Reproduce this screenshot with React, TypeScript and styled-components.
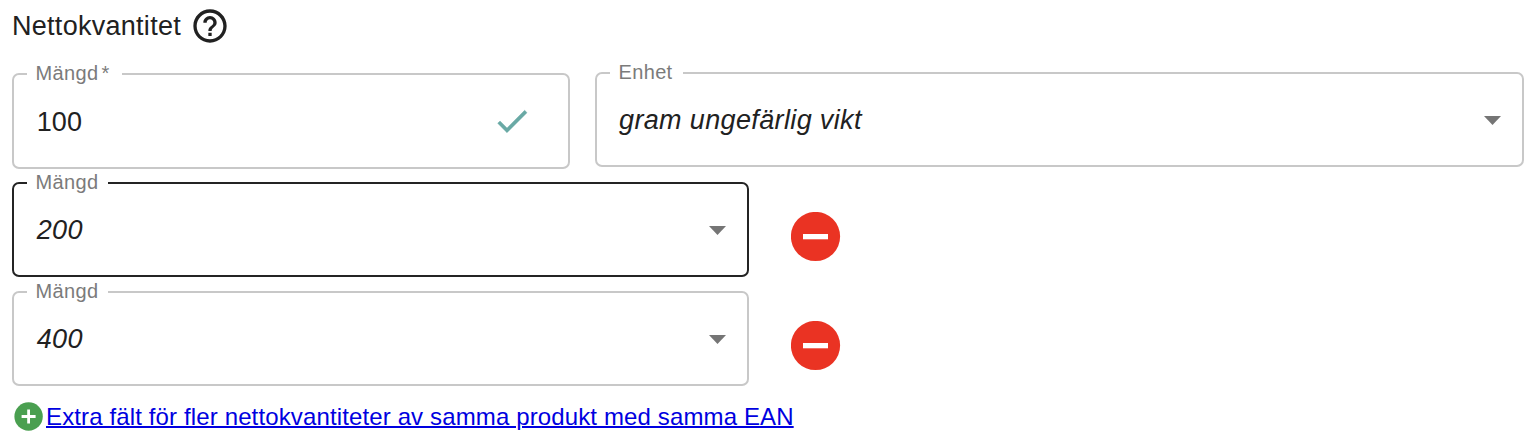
import React from "react";
import styled, { createGlobalStyle } from "styled-components";

const Global = createGlobalStyle`
  * { box-sizing: border-box; }
  body { margin: 0; background: #fff; }
`;

const Page = styled.main`
  height: 441px;
  padding: 8px 12px 0;
  display: flex;
  flex-direction: column;
  overflow: hidden;
  color: #212121;
  font-family: "Liberation Sans", Arial, sans-serif;
`;

const Heading = styled.div`
  display: flex;
  align-items: center;
  gap: 9px;
  height: 36px;
  margin-bottom: 29px;
  font-size: 27px;
  line-height: 36px;
  letter-spacing: 0.28px;
`;

const Row = styled.div`
  display: flex;
  align-items: flex-start;
  height: 95px;
  margin-bottom: 14px;
`;

const Field = styled.div<{ $width: number; $height?: number; $active?: boolean }>`
  position: relative;
  display: flex;
  align-items: center;
  justify-content: space-between;
  width: ${(p) => p.$width}px;
  height: ${(p) => p.$height ?? 95}px;
  padding: 1px 20px 0 22px;
  border: 2px solid ${(p) => (p.$active ? "#242424" : "#c8c8c8")};
  border-radius: 7px;
`;

const Label = styled.span<{ $width: number }>`
  position: absolute;
  top: -14px;
  left: 13px;
  width: ${(p) => p.$width}px;
  padding-left: 8.5px;
  background: #fff;
  color: #7b7b7b;
  font-size: 20px;
  line-height: 24px;
  letter-spacing: 0.35px;
  white-space: nowrap;
`;

const Required = styled.span`
  margin-left: 3px;
`;

const Value = styled.span<{ $italic?: boolean; $numeric?: boolean }>`
  padding-left: ${(p) => (p.$numeric ? 0.7 : 0)}px;
  font-size: 27px;
  line-height: 32px;
  letter-spacing: ${(p) => (p.$italic ? "0.36px" : "0.1px")};
  font-style: ${(p) => (p.$italic ? "italic" : "normal")};
`;

const UnitColumn = styled.div`
  margin: -1px 0 0 25px;
`;

const Arrow = styled.svg`
  width: 17px;
  height: 9px;
  margin: 1px 1px 0 0;
  fill: #757575;
`;

const Check = styled.svg`
  width: 40px;
  height: 40px;
  margin: 0 16px 1px 0;
  fill: #69a9a5;
  stroke: #69a9a5;
  stroke-width: 0.25;
`;

const RemoveButton = styled.button`
  width: 50px;
  height: 50px;
  margin: 30px 0 0 42px;
  padding: 0;
  border: 0;
  background: none;
  svg { display: block; }
`;

const AddRow = styled.div`
  display: flex;
  align-items: center;
  gap: 3px;
  height: 32px;
  margin-left: 2px;
`;

const AddLink = styled.a`
  padding-top: 2px;
  color: #0000e0;
  font-size: 24px;
  line-height: 30px;
  letter-spacing: 0.13px;
  text-decoration: underline;
  text-decoration-thickness: 2px;
  white-space: nowrap;
`;

const Caret = () => (
  <Arrow viewBox="0 0 17 9"><path d="M0 0h17L8.5 9z" /></Arrow>
);

const Remove = () => (
  <RemoveButton aria-label="Ta bort">
    <svg width="50" height="50" viewBox="0 0 50 50">
      <circle cx="24.5" cy="24.5" r="24.6" fill="#ea3323" />
      <path fill="#fff" d="M12 22h25v5.3H12z" />
    </svg>
  </RemoveButton>
);

const ExtraAmount = ({ value, active }: { value: string; active?: boolean }) => (
  <Row>
    <Field $width={737} $active={active}>
      <Label $width={81}>Mängd</Label>
      <Value $italic $numeric>{value}</Value>
      <Caret />
    </Field>
    <Remove />
  </Row>
);

export default function App() {
  return (
    <>
      <Global />
      <Page>
        <Heading>
          <span>Nettokvantitet</span>
          <svg width="40" height="40" viewBox="0 0 24 24" fill="#212121">
            <path d="M11 18h2v-2h-2v2zm1-16C6.48 2 2 6.48 2 12s4.48 10 10 10 10-4.48 10-10S17.52 2 12 2zm0 18c-4.41 0-8-3.59-8-8s3.59-8 8-8 8 3.59 8 8-3.59 8-8 8zm0-14c-2.21 0-4 1.79-4 4h2c0-1.1.9-2 2-2s2 .9 2 2c0 2-3 1.75-3 5h2c0-2.25 3-2.5 3-5 0-2.21-1.79-4-4-4z" />
          </svg>
        </Heading>
        <Row>
          <Field $width={558} $height={96}>
            <Label $width={95}>Mängd<Required>*</Required></Label>
            <Value $numeric>100</Value>
            <Check viewBox="0 0 24 24"><path d="M9 16.17 4.83 12l-1.42 1.41L9 19 21 7l-1.41-1.41z" /></Check>
          </Field>
          <UnitColumn>
            <Field $width={929}>
              <Label $width={73}>Enhet</Label>
              <Value $italic>gram ungefärlig vikt</Value>
              <Caret />
            </Field>
          </UnitColumn>
        </Row>
        <ExtraAmount value="200" active />
        <ExtraAmount value="400" />
        <AddRow>
          <svg width="29" height="29" viewBox="0 0 29 29">
            <circle cx="14.6" cy="14.5" r="14.2" fill="#4a9f50" />
            <path d="M14.6 7.5v14M7.6 14.5h14" stroke="#fff" strokeWidth="2.8" />
          </svg>
          <AddLink>Extra fält för fler nettokvantiteter av samma produkt med samma EAN</AddLink>
        </AddRow>
      </Page>
    </>
  );
}
